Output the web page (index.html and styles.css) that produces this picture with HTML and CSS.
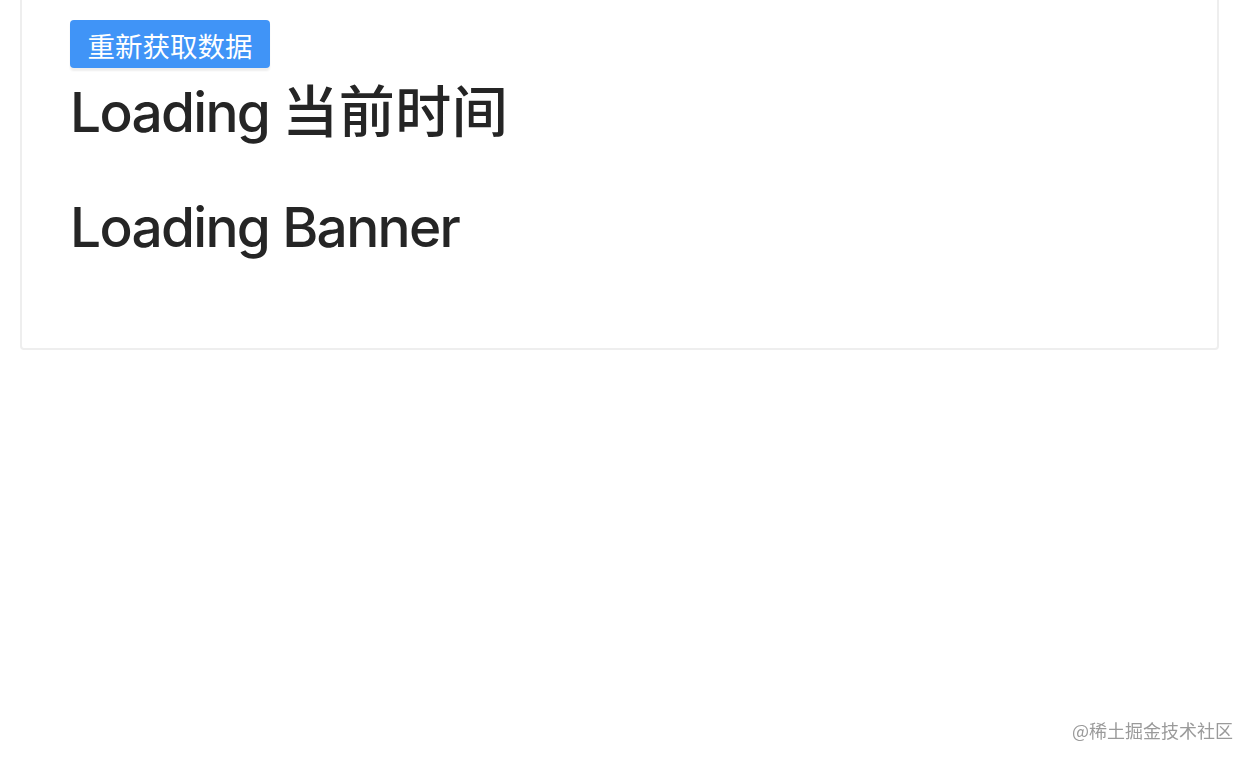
FILE: index.html
```html
<!DOCTYPE html>
<html lang="zh-CN">
<head>
<meta charset="utf-8">
<title>Loading</title>
<link rel="stylesheet" href="styles.css">
</head>
<body>

<div class="card">
    <button class="reload-btn" type="button">重新获取数据</button>
    <h1 class="loading">Loading <span class="cjk">当前时间</span></h1>
    <h1 class="loading">Loading Banner</h1>
</div>

<div class="watermark">@稀土掘金技术社区</div>

</body>
</html>
```

FILE: styles.css
```css
body
{
margin: 0;
background: #fff;
font-family: Inter, "Noto Sans CJK SC", sans-serif;
color: #252525;
}

.card
{
margin: -20px 35px 0 20px;
padding: 38px 48px 88px 48px;
border: 2px solid #eeeeee;
border-radius: 4px;
}

.reload-btn
{
display: block;
width: 200px;
height: 48px;
padding: 0;
border: none;
border-radius: 4px;
background: #4094f7;
color: #fff;
font-family: "Noto Sans CJK SC", sans-serif;
font-size: 27.5px;
line-height: 50px;
box-shadow: 0 3px 2px rgba(0, 0, 0, 0.07);
}

.loading
{
margin: 11px 0 0 0;
font-size: 55px;
font-weight: 500;
letter-spacing: -1.7px;
line-height: 66px;
}

.loading + .loading
{
margin-top: 49px;
}

.cjk
{
font-size: 56px;
letter-spacing: 0.5px;
}

.watermark
{
position: fixed;
right: 21px;
bottom: 19px;
font-family: "Noto Sans CJK SC", sans-serif;
font-size: 18px;
color: #9a9a9a;
}
```
